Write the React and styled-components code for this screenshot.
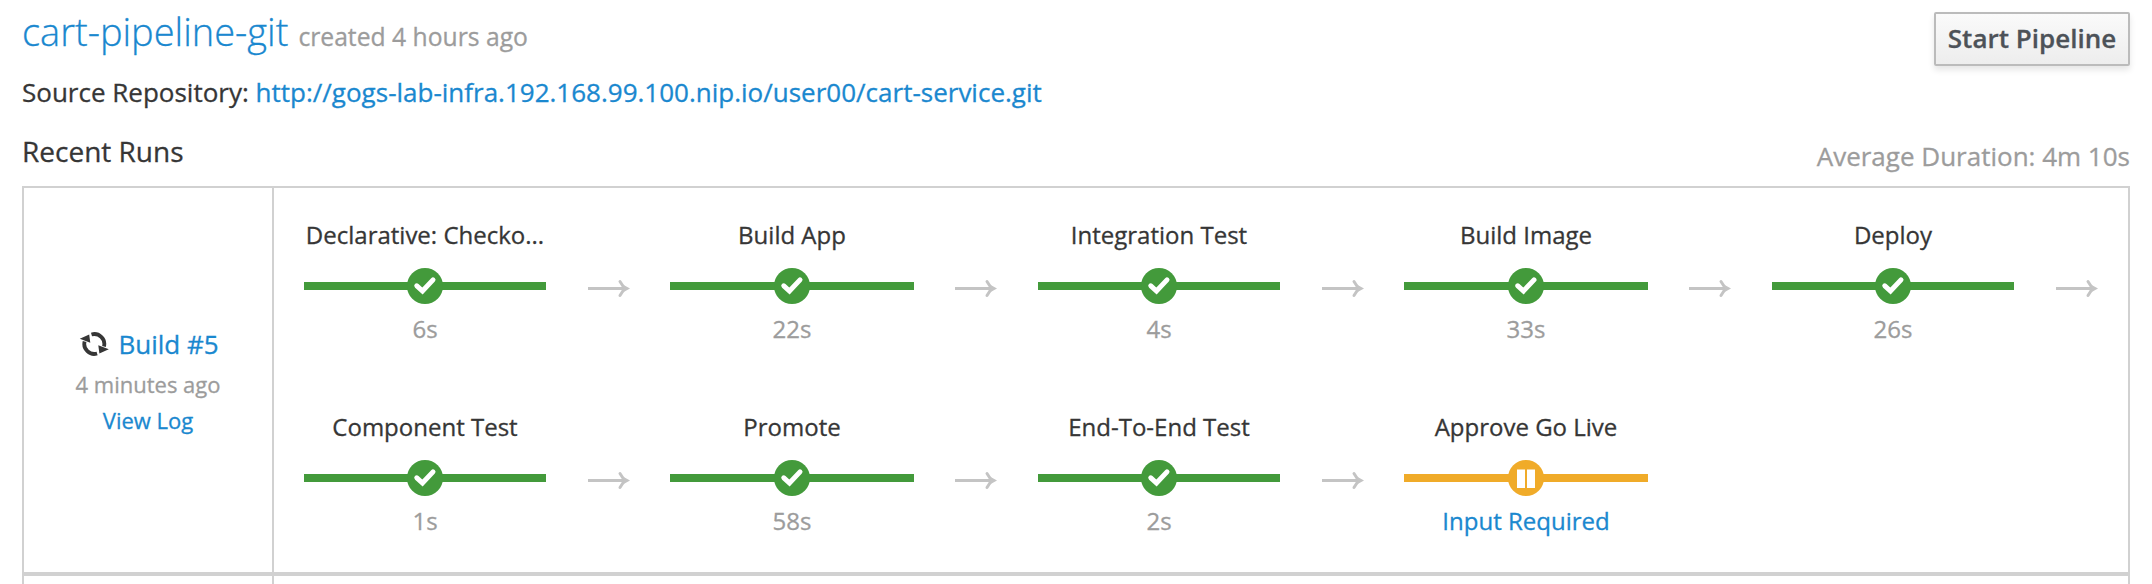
import React from 'react';
import styled, { createGlobalStyle } from 'styled-components';

const Global = createGlobalStyle`
  *, *::before, *::after { box-sizing: border-box; }
  html, body { margin: 0; background: #fff; overflow: hidden; }
  body {
    font: 400 26px/40px "Open Sans", "Noto Sans", sans-serif; color: #363636;
    -webkit-text-stroke: .3px currentColor;
  }
`;
const Link = styled.a`
  color: #1a88cf; text-decoration: none;
`;
const Page = styled.main`
  height: 584px; padding: 12px 22px 0; display: flex; flex-direction: column; overflow: hidden;
  > * { flex: none; }
`;
const Header = styled.header`
  display: flex; justify-content: space-between; align-items: flex-start; height: 60px;
`;
const Title = styled.h1`
  margin: 0; font-weight: 300; font-size: 38px; line-height: 38px; white-space: nowrap;
`;
const Created = styled.small`
  font-size: 24.7px; font-weight: 400; color: #9c9c9c; margin-left: 10px;
`;
const Button = styled.button`
  width: 196px; height: 54px; padding: 0 0 2px; border: 2px solid #bbb; border-radius: 2px;
  background: linear-gradient(#fafafa, #ededed); box-shadow: 0 4px 6px rgba(3, 3, 3, .1);
  font: 600 26px/46px "Open Sans", sans-serif; color: #4d5258; white-space: nowrap;
`;
const Source = styled.div`
  height: 40px; white-space: nowrap;
`;
const RunsBar = styled.div`
  display: flex; justify-content: space-between; height: 74px; padding-top: 19px; white-space: nowrap;
`;
const RunsTitle = styled.h2`
  margin: 0; font-size: 28px; line-height: 40px; font-weight: 400;
`;
const Average = styled.div`
  color: #9c9c9c; padding-top: 5px;
`;
const Runs = styled.section`
  width: 2108px; border: 2px solid #d1d1d1; border-bottom: 0;
`;
const Run = styled.div`
  display: flex; height: ${p => p.$height}px; border-bottom: 4px solid #d1d1d1;
`;
const Summary = styled.div`
  width: 250px; flex: none; border-right: 2px solid #d1d1d1; padding: 136px 0 0; text-align: center;
`;
const BuildLine = styled.div`
  display: flex; justify-content: center; gap: 9px; height: 42px; padding-left: 2px;
  svg { margin-top: 8px; }
`;
const Small = styled.div`
  font-size: 22px; line-height: 36px; color: #9c9c9c;
`;
const Stages = styled.div`
  display: grid; grid-template-columns: repeat(5, 367px); grid-auto-rows: 192px; padding-left: 30px;
`;
const StageBody = styled.div`
  width: ${p => (p.$wide ? 244 : 242)}px; margin: ${p => (p.$wide ? '0 -1px' : '0')};
  text-align: center; padding-top: 30px;
`;
const Stage = styled.div`
  display: flex; font-size: 24px; line-height: 34px;
`;
const StageName = styled.div`
  white-space: nowrap;
`;
const Track = styled.div`
  display: flex; justify-content: center; height: 36px; margin: 16px 0 8px;
  background: linear-gradient(${p => p.$color}, ${p => p.$color}) 0 14px / 100% 8px no-repeat;
`;
const Note = styled.div`
  color: #9c9c9c;
`;
const Arrow = styled.svg`
  margin: 90px 0 0 42px; flex: none;
`;

const GREEN = '#439a3b';
const ORANGE = '#f0ab29';
const stages = [
  ['Declarative: Checko...', '6s'], ['Build App', '22s'], ['Integration Test', '4s'],
  ['Build Image', '33s'], ['Deploy', '26s'], ['Component Test', '1s'],
  ['Promote', '58s'], ['End-To-End Test', '2s'], ['Approve Go Live', null],
];

const StatusIcon = ({ paused }) => (
  <svg width="36" height="36" viewBox="0 0 36 36">
    <circle cx="18" cy="18" r="18" fill={paused ? ORANGE : GREEN} />
    {paused
      ? <path d="M9 9.500h8V28H9zM19 9.500h8V28h-8z" fill="#fff" />
      : <path d="M9.800 17.800L15.500 23L26 11.900" fill="none" stroke="#fff" strokeWidth="5" strokeLinecap="round" />}
  </svg>
);
const RunningIcon = () => (
  <svg width="30" height="25" viewBox="0 0 30 25" fill="none">
    <g stroke="#363636" strokeWidth="3.800">
      <path d="M12.500 2.500A10 10 0 0 1 25 14.500" />
      <path d="M18.100 21.500A10 10 0 0 1 5.600 9.500" />
    </g>
    <path d="M.8 6.800L10.200 2.500L11.300 10.700ZM29.800 17.200L20.400 21.500L19.300 13.300Z" fill="#363636" />
  </svg>
);

export default function App() {
  return (
    <Page>
      <Global />
      <Header>
        <Title><Link>cart-pipeline-git</Link><Created>created 4 hours ago</Created></Title>
        <Button>Start Pipeline</Button>
      </Header>
      <Source>Source Repository: <Link>http://gogs-lab-infra.192.168.99.100.nip.io/user00/cart-service.git</Link></Source>
      <RunsBar>
        <RunsTitle>Recent Runs</RunsTitle>
        <Average>Average Duration: 4m 10s</Average>
      </RunsBar>
      <Runs>
        <Run $height={388}>
          <Summary>
            <BuildLine><RunningIcon /><Link>Build #5</Link></BuildLine>
            <Small>4 minutes ago</Small>
            <Small><Link>View Log</Link></Small>
          </Summary>
          <Stages>
            {stages.map(([name, time], i) => (
              <Stage key={name}>
                <StageBody $wide={(i % 5) % 2 === 1}>
                  <StageName>{name}</StageName>
                  <Track $color={time ? GREEN : ORANGE}><StatusIcon paused={!time} /></Track>
                  <Note>{time || <Link>Input Required</Link>}</Note>
                </StageBody>
                {time && (
                  <Arrow width="42" height="20" viewBox="0 0 42 20" fill="none" stroke="#c4c4c4">
                    <path d="M0 10.500H37" strokeWidth="2.800" />
                    <path d="M32 3.500L36.500 10.500L32 17.500" strokeWidth="3" strokeLinecap="round" />
                    <path d="M33 5.500L42 10.500L33 15.500L36 10.500Z" fill="#c4c4c4" stroke="none" />
                  </Arrow>
                )}
              </Stage>
            ))}
          </Stages>
        </Run>
        <Run $height={60}><Summary /></Run>
      </Runs>
    </Page>
  );
}
